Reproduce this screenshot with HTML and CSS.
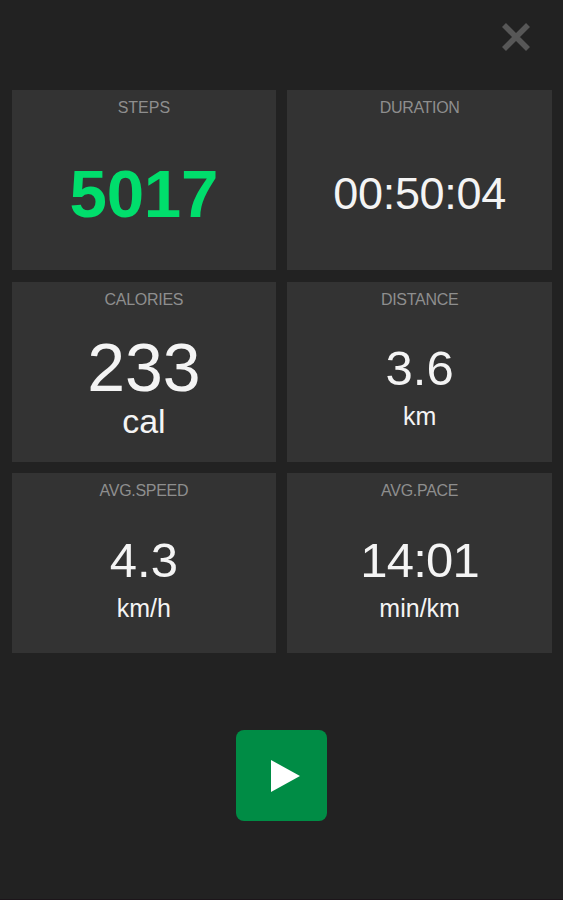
FILE: index.html
```html
<!DOCTYPE html>
<html lang="en">
<head>
    <meta charset="UTF-8">
    <meta name="viewport" content="width=device-width, initial-scale=1.0">
    <title>Pedometer</title>
    <link rel="stylesheet" href="styles.css">
</head>
<body>
    <div class="screen">
        <header class="top-bar">
            <button class="close-button" type="button" aria-label="Close">
                <svg width="28" height="28" viewBox="0 0 28 28">
                    <path d="M2 2L26 26M26 2L2 26" fill="none" stroke="#575757" stroke-width="5.6"/>
                </svg>
            </button>
        </header>

        <main class="stats">
            <section class="card">
                <h2 class="label steps-label">STEPS</h2>
                <div class="reading">
                    <div class="value steps">5017</div>
                </div>
            </section>

            <section class="card">
                <h2 class="label">DURATION</h2>
                <div class="reading">
                    <div class="value duration">00:50:04</div>
                </div>
            </section>

            <section class="card">
                <h2 class="label">CALORIES</h2>
                <div class="reading">
                    <div class="value large">233</div>
                    <div class="unit unit-large">cal</div>
                </div>
            </section>

            <section class="card">
                <h2 class="label">DISTANCE</h2>
                <div class="reading">
                    <div class="value">3.6</div>
                    <div class="unit">km</div>
                </div>
            </section>

            <section class="card">
                <h2 class="label">AVG.SPEED</h2>
                <div class="reading">
                    <div class="value">4.3</div>
                    <div class="unit">km/h</div>
                </div>
            </section>

            <section class="card">
                <h2 class="label">AVG.PACE</h2>
                <div class="reading">
                    <div class="value pace">14:01</div>
                    <div class="unit">min/km</div>
                </div>
            </section>
        </main>

        <footer class="controls">
            <button class="play-button" type="button" aria-label="Start">
                <svg width="29" height="32" viewBox="0 0 29 32">
                    <path d="M0 0L29 16L0 32Z" fill="#fff"/>
                </svg>
            </button>
        </footer>
    </div>
</body>
</html>
```

FILE: styles.css
```css
* {
    box-sizing: border-box;
}
body {
    margin: 0;
    background-color: #222;
    color: #f4f4f4;
    font-family: "Liberation Sans", Arial, sans-serif;
}
.screen {
    display: flex;
    flex-direction: column;
    height: 900px;
    border-bottom: 1px solid #1c151a;
}
button {
    display: flex;
    padding: 0;
    border: 0;
    background: none;
    cursor: pointer;
}
.top-bar {
    display: flex;
    justify-content: flex-end;
    height: 90px;
    padding: 23px 33px 0 0;
}
.close-button {
    width: 28px;
    height: 28px;
}
.stats {
    display: grid;
    grid-template-columns: 1fr 1fr;
    grid-auto-rows: 180px;
    gap: 11.5px 11px;
    padding: 0 11px 0 11.5px;
}
.card {
    display: flex;
    flex-direction: column;
    padding-top: 10px;
    background-color: #333;
    text-align: center;
}
.label {
    margin: 0;
    color: #8e8e8e;
    font-size: 16px;
    font-weight: normal;
    letter-spacing: -0.3px;
    line-height: 16px;
}
.steps-label {
    letter-spacing: 0;
}
.reading {
    display: flex;
    flex: 1;
    flex-direction: column;
    justify-content: center;
    padding-top: 1px;
}
.value {
    font-size: 49px;
    line-height: 62px;
}
.steps {
    color: #00de6c;
    font-size: 67.3px;
    font-weight: bold;
    letter-spacing: -0.3px;
}
.duration {
    font-size: 45px;
    letter-spacing: -0.3px;
}
.pace {
    letter-spacing: -0.8px;
}
.large {
    font-size: 68px;
    line-height: 72px;
}
.unit {
    font-size: 25px;
    line-height: 34px;
}
.unit-large {
    font-size: 34px;
    line-height: 37px;
}
.controls {
    display: flex;
    justify-content: center;
    padding-top: 77px;
}
.play-button {
    align-items: center;
    justify-content: center;
    width: 91px;
    height: 91px;
    padding-left: 7px;
    border-radius: 8px;
    background-color: #008c45;
}
```
